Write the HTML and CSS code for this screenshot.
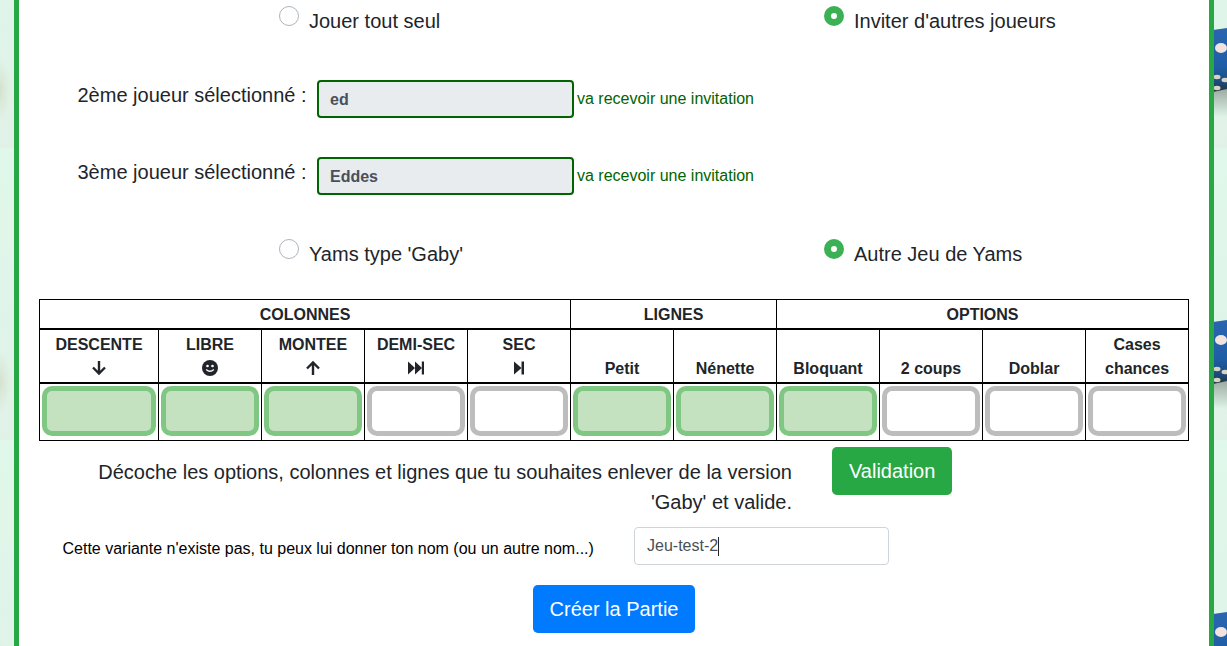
FILE: index.html
```html
<!DOCTYPE html>
<html lang="fr">
<head>
<meta charset="utf-8">
<title>Yams</title>
<link rel="stylesheet" href="styles.css">
</head>
<body>
<div class="backdrop" aria-hidden="true">
  <svg class="die die-1" viewBox="0 0 14 95"><use href="#die-art"/></svg>
  <svg class="die die-2" viewBox="0 0 14 95"><use href="#die-art"/></svg>
  <svg class="die die-3" viewBox="0 0 14 37"><use href="#die-art"/></svg>
  <svg class="defs" width="0" height="0">
    <defs>
      <linearGradient id="die-blue" x1="0" y1="0" x2="0" y2="1">
        <stop offset="0" stop-color="#2a66b0"/>
        <stop offset=".6" stop-color="#1f5ea6"/>
        <stop offset=".85" stop-color="#1c4a7c"/>
        <stop offset="1" stop-color="#26323a"/>
      </linearGradient>
      <linearGradient id="die-shadow" x1="0" y1="0" x2="0" y2="1">
        <stop offset="0" stop-color="#98a69c"/>
        <stop offset="1" stop-color="#dff4e8"/>
      </linearGradient>
      <g id="die-art">
        <rect y="62" width="14" height="30" fill="url(#die-shadow)"/>
        <path d="M0 5 14 3V64L0 67Z" fill="url(#die-blue)"/>
        <ellipse cx="8" cy="23" rx="6" ry="5" fill="#f1e4e0"/>
        <ellipse cx="4" cy="52" rx="3.500" ry="2.200" fill="#d8d2c0"/>
        <ellipse cx="12" cy="55" rx="3.500" ry="2.200" fill="#d8d2c0"/>
        <ellipse cx="4" cy="63" rx="3.500" ry="2.200" fill="#d8d2c0"/>
      </g>
    </defs>
  </svg>
</div>
<main class="panel">
  <div class="choice-row first">
    <label class="choice"><span class="radio"></span>Jouer tout seul</label>
    <label class="choice"><span class="radio on"></span>Inviter d'autres joueurs</label>
  </div>
  <div class="player-row">
    <span class="player-label">2ème joueur sélectionné :</span>
    <span class="player-box">ed</span>
    <span class="invite">va recevoir une invitation</span>
  </div>
  <div class="player-row second">
    <span class="player-label">3ème joueur sélectionné :</span>
    <span class="player-box">Eddes</span>
    <span class="invite">va recevoir une invitation</span>
  </div>
  <div class="choice-row third">
    <label class="choice"><span class="radio"></span>Yams type 'Gaby'</label>
    <label class="choice"><span class="radio on"></span>Autre Jeu de Yams</label>
  </div>
  <table class="grid">
    <colgroup>
      <col class="c1"><col class="c2"><col class="c3"><col class="c4"><col class="c5"><col class="c6"><col class="c7"><col class="c8"><col class="c9"><col class="c10"><col class="c11">
    </colgroup>
    <tr class="head-1"><th colspan="5">COLONNES</th><th colspan="2">LIGNES</th><th colspan="4">OPTIONS</th></tr>
    <tr class="head-2">
      <th>DESCENTE<br><svg class="ico" viewBox="0 0 16 16"><path d="M8 1v12.500M2 7.500l6 6 6-6" fill="none" stroke="currentColor" stroke-width="2.400"/></svg></th>
      <th>LIBRE<br><svg class="ico" viewBox="0 0 16 16"><circle cx="8" cy="8" r="8" fill="currentColor"/><circle cx="5.500" cy="6" r="1.300" fill="#fff"/><circle cx="10.500" cy="6" r="1.300" fill="#fff"/><path d="M4.200 9.500q3.800 3.400 7.600 0" fill="none" stroke="#fff" stroke-width="1.300"/></svg></th>
      <th>MONTEE<br><svg class="ico" viewBox="0 0 16 16"><path d="M8 15V2.500M2 8.500l6-6 6 6" fill="none" stroke="currentColor" stroke-width="2.400"/></svg></th>
      <th>DEMI-SEC<br><svg class="ico" viewBox="0 0 16 16"><path d="M0 1.500 7 8 0 14.500ZM7 1.500 14 8 7 14.500Z" fill="currentColor"/><rect x="13.800" y="1.500" width="2.200" height="13" fill="currentColor"/></svg></th>
      <th>SEC<br><svg class="ico" viewBox="0 0 16 16"><path d="M3 1.500 10.500 8 3 14.500Z" fill="currentColor"/><rect x="10.500" y="1.500" width="2.500" height="13" fill="currentColor"/></svg></th>
      <th class="low">Petit</th>
      <th class="low">Nénette</th>
      <th class="low">Bloquant</th>
      <th class="low">2 coups</th>
      <th class="low">Doblar</th>
      <th class="low">Cases<br>chances</th>
    </tr>
    <tr class="boxes">
      <td><span class="box on"></span></td><td><span class="box on"></span></td><td><span class="box on"></span></td><td><span class="box"></span></td><td><span class="box"></span></td>
      <td><span class="box on"></span></td><td><span class="box on"></span></td>
      <td><span class="box on"></span></td><td><span class="box"></span></td><td><span class="box"></span></td><td><span class="box"></span></td>
    </tr>
  </table>
  <div class="validate-row">
    <p class="hint">Décoche les options, colonnes et lignes que tu souhaites enlever de la version 'Gaby' et valide.</p>
    <button class="btn green">Validation</button>
  </div>
  <div class="name-row">
    <span class="name-label">Cette variante n'existe pas, tu peux lui donner ton nom (ou un autre nom...)</span>
    <span class="name-input">Jeu-test-2<i class="caret"></i></span>
  </div>
  <div class="create-row"><button class="btn blue">Créer la Partie</button></div>
</main>
</body>
</html>
```
FILE: styles.css
```css
* { box-sizing: border-box; }
html, body { height: 646px; overflow: hidden; }
body {
  margin: 0;
  position: relative;
  font-family: "Liberation Sans", Arial, sans-serif;
  color: #212529;
  font-size: 20px;
  line-height: 30px;
  background-color: #dff7ea;
  background-image:
    radial-gradient(ellipse 11px 30px at 0 234px, rgba(205, 212, 185, .55), rgba(205, 212, 185, 0)),
    linear-gradient(180deg, #dff8ea 0, #dff5e9 50%, #e1f1e7 100%);
  background-size: 100% 292px;
  background-position: 0 148px;
}
.backdrop { position: absolute; inset: 0; overflow: hidden; }
.defs { position: absolute; }
.die { position: absolute; left: 1213px; width: 14px; height: 95px; }
.die-1 { top: 25px; }
.die-2 { top: 317px; }
.die-3 { top: 609px; height: 37px; }
.panel {
  position: relative;
  width: 1200px;
  height: 646px;
  margin-left: 14px;
  background: #fff;
  border-left: 5px solid #28a745;
  border-right: 5px solid #28a745;
  padding: 6px 20px 0;
}
.choice-row { display: grid; grid-template-columns: 545px 1fr; height: 30px; padding-left: 240px; }
.choice { display: flex; align-items: flex-start; }
.radio {
  width: 20px; height: 20px; border-radius: 50%;
  border: 1px solid #adb5bd; background: #fff;
  margin-right: 10px; flex: none;
}
.radio.on { border: 7px solid #3cb054; }
.choice-row.third { margin-top: 44px; }
.player-row { display: flex; align-items: flex-start; height: 38px; margin-top: 44px; padding-left: 38.500px; }
.player-row.second { margin-top: 39px; }
.player-label { width: 239.500px; line-height: 30px; }
.player-box {
  width: 257px; height: 38px;
  background: #e9ecef; border: 2px solid #006400; border-radius: 4px;
  padding: 0 11px; font-size: 16px; font-weight: 700; color: #495057; line-height: 36px;
}
.invite { margin-left: 3px; font-size: 16px; line-height: 38px; color: #006400; }
.grid {
  border-collapse: collapse; table-layout: fixed; width: 1149px; margin-top: 30px;
  font-size: 16px; line-height: 24px; color: #212529;
}
.c1 { width: 119px; } .c2 { width: 103px; } .c3 { width: 103px; } .c4 { width: 103px; } .c5 { width: 103px; }
.c6 { width: 103px; } .c7 { width: 103px; } .c8 { width: 103px; } .c9 { width: 103px; } .c10 { width: 103px; } .c11 { width: 103px; }
.grid th, .grid td { border: 1px solid #000; padding: 0; text-align: center; }
.head-1 th { height: 29px; padding-top: 2px; border-bottom-width: 2px; }
.head-2 th { height: 54px; vertical-align: top; padding-top: 3px; border-bottom-width: 2px; }
.head-2 th.low { vertical-align: bottom; padding: 0 0 1px; }
.ico { width: 16px; height: 16px; vertical-align: -2px; }
.boxes td { height: 58px; padding: 2px 2px 4px; }
.box {
  display: block; height: 50px; border-radius: 10px;
  border: 5px solid #bdbdbd; background: #fff;
}
.box.on { border-color: #81c784; background: #c4e1c0; }
.validate-row { display: flex; align-items: flex-start; margin-top: 6px; }
.hint { margin: 10px 0 0; width: 753px; text-align: right; }
.btn {
  font-family: inherit; font-size: 20px; line-height: 30px; color: #fff;
  border: 1px solid transparent; border-radius: 4.800px; padding: 8px 16px; height: 48px;
}
.btn.green { background: #28a745; margin-left: 40px; }
.btn.blue { background: #007bff; width: 162px; padding: 8px 0; }
.name-row { display: flex; align-items: center; height: 38px; margin-top: 10px; padding-left: 23.500px; }
.name-label { width: 571.500px; padding-top: 6px; font-size: 16px; line-height: 24px; color: #000; }
.name-input {
  width: 255px; height: 38px; border: 1px solid #ced4da; border-radius: 4px;
  padding: 0 12px; font-size: 16px; line-height: 34px; color: #495057; display: flex; align-items: center;
}
.caret { display: block; width: 1px; height: 19px; background: #212529; }
.create-row { display: flex; padding-left: 494px; margin-top: 20px; }
```
